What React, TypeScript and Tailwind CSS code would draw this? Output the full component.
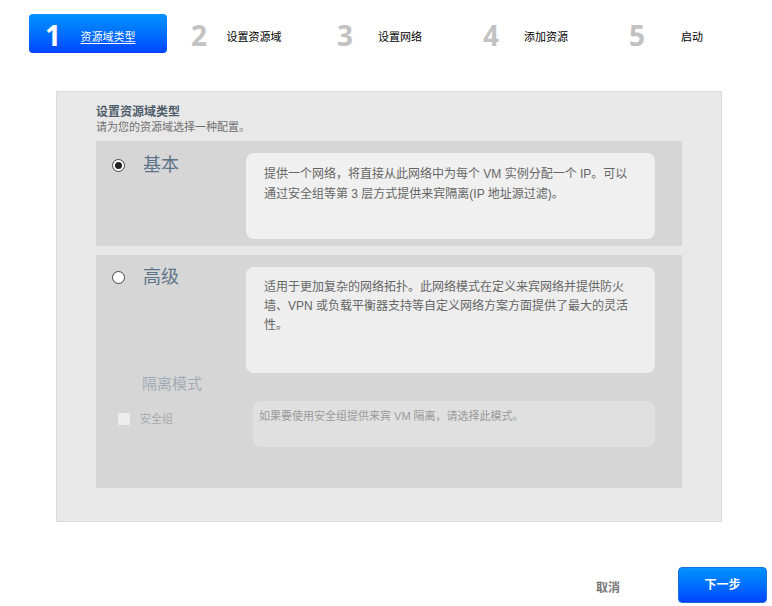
import React from 'react';

const steps = [
  { n: '1', label: '资源域类型' },
  { n: '2', label: '设置资源域' },
  { n: '3', label: '设置网络' },
  { n: '4', label: '添加资源' },
  { n: '5', label: '启动' },
];

const font = { fontFamily: '"Liberation Sans", "Noto Sans CJK SC", sans-serif' };

function Radio({ checked }: { checked?: boolean }) {
  return (
    <span className="flex h-[13px] w-[13px] shrink-0 items-center justify-center rounded-full border border-[#444] bg-white">
      {checked && <span className="h-[7px] w-[7px] rounded-full bg-[#222]" />}
    </span>
  );
}

export default function App() {
  return (
    <div className="h-[606px] w-[772px] overflow-hidden bg-white" style={font}>
      {/* stepper */}
      <div className="flex gap-2 pl-[29px] pt-[14px]">
        {steps.map((s, i) => {
          const active = i === 0;
          return (
            <div
              key={s.n}
              className={`flex h-[39px] w-[138px] items-center rounded-[4px] ${
                active ? 'bg-gradient-to-b from-[#0a92ff] to-[#0042ff]' : ''
              }`}
            >
              <span
                className={`w-[40px] pl-4 pt-[2px] text-[28px] font-bold leading-none ${active ? 'text-white' : 'text-[#c2c2c2]'}`}
                style={{ fontFamily: '"Open Sans", "Liberation Sans", sans-serif' }}
              >
                {s.n}
              </span>
              <span
                className={`flex-1 pr-5 pt-2 text-center text-[11px] ${active ? 'text-white underline underline-offset-2' : 'text-black'}`}
              >
                {s.label}
              </span>
            </div>
          );
        })}
      </div>

      {/* panel */}
      <div className="ml-[56px] mt-[38px] h-[431px] w-[666px] border border-[#dcdcdc] bg-[#e8e8e8] px-[39px] pt-[13px]">
        <div className="text-[12px] font-bold leading-[15px] text-[#4e5c6a]">设置资源域类型</div>
        <div className="mb-[7px] text-[11px] leading-[14px] text-[#707070]">请为您的资源域选择一种配置。</div>

        {/* basic */}
        <div className="flex h-[105px] w-[586px] bg-[#d6d6d6] pt-3">
          <div className="flex h-[24px] w-[150px] items-center pl-4">
            <Radio checked />
            <span className="ml-[18px] text-[18px] leading-[24px] text-[#5d7488]">基本</span>
          </div>
          <div className="h-[86px] w-[409px] rounded-[8px] bg-[#f0f0f0] pl-[18px] pt-[11px] text-[12px] leading-[20px] text-[#666]">
            <div className="whitespace-nowrap">提供一个网络，将直接从此网络中为每个 VM 实例分配一个 IP。可以</div>
            <div className="whitespace-nowrap">通过安全组等第 3 层方式提供来宾隔离(IP 地址源过滤)。</div>
          </div>
        </div>

        {/* advanced */}
        <div className="mt-[9px] h-[233px] w-[586px] bg-[#d6d6d6] pt-3">
          <div className="flex">
            <div className="flex h-[20px] w-[150px] items-center pl-4">
              <Radio />
              <span className="ml-[18px] text-[18px] leading-[24px] text-[#5d7488]">高级</span>
            </div>
            <div className="h-[106px] w-[409px] rounded-[8px] bg-[#eeeeee] pl-[18px] pt-[11px] text-[12px] leading-[19px] text-[#666]">
              <div className="whitespace-nowrap">适用于更加复杂的网络拓扑。此网络模式在定义来宾网络并提供防火</div>
              <div className="whitespace-nowrap">墙、VPN 或负载平衡器支持等自定义网络方案方面提供了最大的灵活</div>
              <div className="whitespace-nowrap">性。</div>
            </div>
          </div>
          <div className="mt-px pl-[46px] text-[15px] leading-[20px] text-[#a2abb4]">隔离模式</div>
          <div className="mt-[7px] flex">
            <div className="flex w-[157px] items-start pl-[22px] pt-3">
              <span className="h-[12px] w-[12px] bg-[#ececec]" />
              <span className="ml-[10px] text-[11px] leading-[12px] text-[#a8a8a8]">安全组</span>
            </div>
            <div className="h-[46px] w-[402px] rounded-[8px] bg-[#e0e0e0] pl-[6px] pt-[8px] text-[11px] leading-[14px] text-[#9a9a9a]">
              如果要使用安全组提供来宾 VM 隔离，请选择此模式。
            </div>
          </div>
        </div>
      </div>

      {/* footer */}
      <div className="mt-[45px] flex items-center justify-end pr-[5px]">
        <span className="mr-[58px] mt-[6px] text-[12px] font-bold text-[#777]">取消</span>
        <button className="h-[36px] w-[89px] rounded-[4px] border border-[#1a6fe0] bg-gradient-to-b from-[#0a92ff] to-[#0042ff] text-[12px] font-bold text-white">
          下一步
        </button>
      </div>
    </div>
  );
}
